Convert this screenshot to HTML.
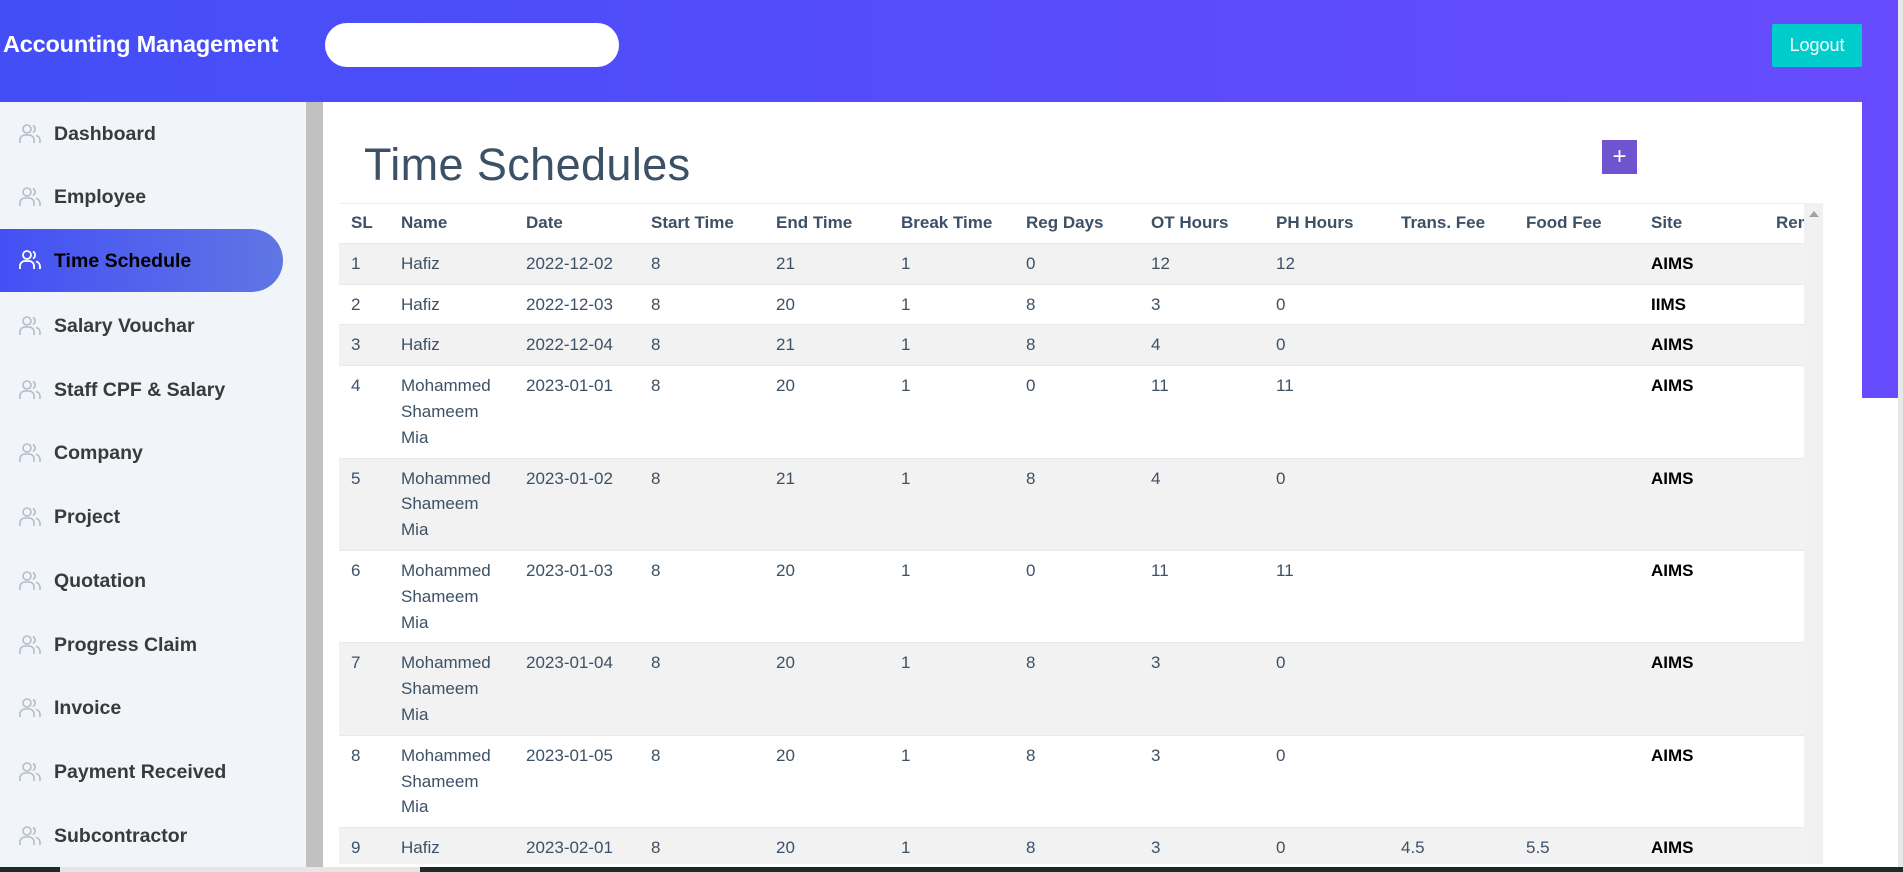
<!DOCTYPE html>
<html><head><meta charset="utf-8"><style>
*{box-sizing:border-box;margin:0;padding:0}
html,body{width:1903px;height:872px;overflow:hidden;background:#fff;font-family:"Liberation Sans",Arial,sans-serif}
.hdr{position:absolute;left:0;top:0;width:1898px;height:102px;background:linear-gradient(90deg,#434ef7,#5a4cfb 60%,#674cfd)}
.rstrip{position:absolute;left:1862px;top:102px;width:36px;height:296px;background:#674cfd}
.pscroll{position:absolute;left:1898px;top:0;width:5px;height:872px;background:#e8e8e8}
.brand{position:absolute;left:3px;top:31px;color:#fff;font-weight:bold;font-size:23.5px;letter-spacing:-0.2px}
.search{position:absolute;left:325px;top:23px;width:294px;height:44px;background:#fff;border-radius:22px}
.logout{position:absolute;left:1772px;top:24px;width:90px;height:43px;background:#00cccc;color:#fff;font-size:18px;text-align:center;line-height:43px;border-radius:2px}
.side{position:absolute;left:0;top:102px;width:306px;height:765px;background:#f1f4f9}
.sbar{position:absolute;left:306px;top:102px;width:17px;height:765px;background:#c1c1c1}
.item{position:absolute;left:0;height:40px;width:283px;font-size:19.5px;font-weight:bold;color:#3a3a3a;line-height:40px;padding-left:54px}
.item svg{position:absolute;left:19px;top:10px}
.item.act{height:63px;line-height:63px;border-radius:0 32px 32px 0;background:linear-gradient(90deg,#4450f5,#5f76e4);color:#000}
.item.act svg{top:21px}
.card{position:absolute;left:325px;top:102px;width:1537px;height:770px;background:#fff;border-radius:8px 8px 0 0}
h1{position:absolute;left:364px;top:139px;font-size:45px;font-weight:normal;color:#3d5166;letter-spacing:0.4px}
.plus{position:absolute;left:1602px;top:140px;width:35px;height:34px;background:#7053cf;color:#fff;font-size:24px;text-align:center;line-height:33px}
.tw{position:absolute;left:339px;top:203px;width:1465px;height:661px;overflow:hidden;border-top:1px solid #e9ecef}
table{border-collapse:collapse;table-layout:fixed;width:1550px}
td,th{padding:7px 12px;font-size:17px;line-height:25.8px;color:#3d5166;text-align:left;vertical-align:top;white-space:normal;border-bottom:1px solid #e6e9ed}
th{font-weight:bold;color:#3d5166;padding:6px 12px 7px}
tbody tr:nth-child(odd) td{background:#f2f2f2}
td.s{font-weight:bold;color:#000}
.vs{position:absolute;left:1804px;top:203px;width:19px;height:661px;background:#f1f1f1}
.vs:before{content:"";position:absolute;left:5px;top:8px;border:5px solid transparent;border-bottom:6px solid #a3a3a3;border-top:0}
.task{position:absolute;left:0;top:867px;width:1903px;height:5px;background:#1c2a2a}
.task i{position:absolute;left:60px;top:0;width:360px;height:5px;background:#e6e6e6}
</style></head><body>
<div class="hdr"></div><div class="rstrip"></div><div class="pscroll"></div>
<div class="brand">Accounting Management</div>
<div class="search"></div>
<div class="logout">Logout</div>
<div class="side"></div><div class="sbar"></div>
<div class="card"></div>
<h1>Time Schedules</h1>
<div class="plus">+</div>
<div class="tw"><table>
<colgroup><col style="width:50px"><col style="width:125px"><col style="width:125px"><col style="width:125px"><col style="width:125px"><col style="width:125px"><col style="width:125px"><col style="width:125px"><col style="width:125px"><col style="width:125px"><col style="width:125px"><col style="width:125px"><col style="width:125px"></colgroup>
<thead><tr><th>SL</th><th>Name</th><th>Date</th><th>Start Time</th><th>End Time</th><th>Break Time</th><th>Reg Days</th><th>OT Hours</th><th>PH Hours</th><th>Trans. Fee</th><th>Food Fee</th><th>Site</th><th>Remarks</th></tr></thead>
<tbody>
<tr><td>1</td><td>Hafiz</td><td>2022-12-02</td><td>8</td><td>21</td><td>1</td><td>0</td><td>12</td><td>12</td><td></td><td></td><td class="s">AIMS</td><td></td></tr>
<tr><td>2</td><td>Hafiz</td><td>2022-12-03</td><td>8</td><td>20</td><td>1</td><td>8</td><td>3</td><td>0</td><td></td><td></td><td class="s">IIMS</td><td></td></tr>
<tr><td>3</td><td>Hafiz</td><td>2022-12-04</td><td>8</td><td>21</td><td>1</td><td>8</td><td>4</td><td>0</td><td></td><td></td><td class="s">AIMS</td><td></td></tr>
<tr><td>4</td><td>Mohammed Shameem Mia</td><td>2023-01-01</td><td>8</td><td>20</td><td>1</td><td>0</td><td>11</td><td>11</td><td></td><td></td><td class="s">AIMS</td><td></td></tr>
<tr><td>5</td><td>Mohammed Shameem Mia</td><td>2023-01-02</td><td>8</td><td>21</td><td>1</td><td>8</td><td>4</td><td>0</td><td></td><td></td><td class="s">AIMS</td><td></td></tr>
<tr><td>6</td><td>Mohammed Shameem Mia</td><td>2023-01-03</td><td>8</td><td>20</td><td>1</td><td>0</td><td>11</td><td>11</td><td></td><td></td><td class="s">AIMS</td><td></td></tr>
<tr><td>7</td><td>Mohammed Shameem Mia</td><td>2023-01-04</td><td>8</td><td>20</td><td>1</td><td>8</td><td>3</td><td>0</td><td></td><td></td><td class="s">AIMS</td><td></td></tr>
<tr><td>8</td><td>Mohammed Shameem Mia</td><td>2023-01-05</td><td>8</td><td>20</td><td>1</td><td>8</td><td>3</td><td>0</td><td></td><td></td><td class="s">AIMS</td><td></td></tr>
<tr><td>9</td><td>Hafiz</td><td>2023-02-01</td><td>8</td><td>20</td><td>1</td><td>8</td><td>3</td><td>0</td><td>4.5</td><td>5.5</td><td class="s">AIMS</td><td></td></tr>
</tbody></table></div>
<div class="vs"></div>
<div class="task"><i></i></div>

<div class="item" style="top:114px"><svg width="22" height="20" viewBox="0 0 22 20" fill="none" stroke="#b4bccb" stroke-width="1.6"><circle cx="8" cy="5" r="4"/><path d="M1 19v-3a5 5 0 0 1 5-5h4a5 5 0 0 1 5 5v3M14 1.5a4 4 0 0 1 0 7M17 11.5a5 5 0 0 1 4 4.5v3"/></svg>Dashboard</div>
<div class="item" style="top:177px"><svg width="22" height="20" viewBox="0 0 22 20" fill="none" stroke="#b4bccb" stroke-width="1.6"><circle cx="8" cy="5" r="4"/><path d="M1 19v-3a5 5 0 0 1 5-5h4a5 5 0 0 1 5 5v3M14 1.5a4 4 0 0 1 0 7M17 11.5a5 5 0 0 1 4 4.5v3"/></svg>Employee</div>
<div class="item act" style="top:229px;line-height:65px"><svg width="22" height="20" viewBox="0 0 22 20" fill="none" stroke="#fff" stroke-width="1.8"><circle cx="8" cy="5" r="4"/><path d="M1 19v-3a5 5 0 0 1 5-5h4a5 5 0 0 1 5 5v3M14 1.5a4 4 0 0 1 0 7M17 11.5a5 5 0 0 1 4 4.5v3"/></svg>Time Schedule</div>
<div class="item" style="top:306px"><svg width="22" height="20" viewBox="0 0 22 20" fill="none" stroke="#b4bccb" stroke-width="1.6"><circle cx="8" cy="5" r="4"/><path d="M1 19v-3a5 5 0 0 1 5-5h4a5 5 0 0 1 5 5v3M14 1.5a4 4 0 0 1 0 7M17 11.5a5 5 0 0 1 4 4.5v3"/></svg>Salary Vouchar</div>
<div class="item" style="top:370px"><svg width="22" height="20" viewBox="0 0 22 20" fill="none" stroke="#b4bccb" stroke-width="1.6"><circle cx="8" cy="5" r="4"/><path d="M1 19v-3a5 5 0 0 1 5-5h4a5 5 0 0 1 5 5v3M14 1.5a4 4 0 0 1 0 7M17 11.5a5 5 0 0 1 4 4.5v3"/></svg>Staff CPF &amp; Salary</div>
<div class="item" style="top:433px"><svg width="22" height="20" viewBox="0 0 22 20" fill="none" stroke="#b4bccb" stroke-width="1.6"><circle cx="8" cy="5" r="4"/><path d="M1 19v-3a5 5 0 0 1 5-5h4a5 5 0 0 1 5 5v3M14 1.5a4 4 0 0 1 0 7M17 11.5a5 5 0 0 1 4 4.5v3"/></svg>Company</div>
<div class="item" style="top:497px"><svg width="22" height="20" viewBox="0 0 22 20" fill="none" stroke="#b4bccb" stroke-width="1.6"><circle cx="8" cy="5" r="4"/><path d="M1 19v-3a5 5 0 0 1 5-5h4a5 5 0 0 1 5 5v3M14 1.5a4 4 0 0 1 0 7M17 11.5a5 5 0 0 1 4 4.5v3"/></svg>Project</div>
<div class="item" style="top:561px"><svg width="22" height="20" viewBox="0 0 22 20" fill="none" stroke="#b4bccb" stroke-width="1.6"><circle cx="8" cy="5" r="4"/><path d="M1 19v-3a5 5 0 0 1 5-5h4a5 5 0 0 1 5 5v3M14 1.5a4 4 0 0 1 0 7M17 11.5a5 5 0 0 1 4 4.5v3"/></svg>Quotation</div>
<div class="item" style="top:625px"><svg width="22" height="20" viewBox="0 0 22 20" fill="none" stroke="#b4bccb" stroke-width="1.6"><circle cx="8" cy="5" r="4"/><path d="M1 19v-3a5 5 0 0 1 5-5h4a5 5 0 0 1 5 5v3M14 1.5a4 4 0 0 1 0 7M17 11.5a5 5 0 0 1 4 4.5v3"/></svg>Progress Claim</div>
<div class="item" style="top:688px"><svg width="22" height="20" viewBox="0 0 22 20" fill="none" stroke="#b4bccb" stroke-width="1.6"><circle cx="8" cy="5" r="4"/><path d="M1 19v-3a5 5 0 0 1 5-5h4a5 5 0 0 1 5 5v3M14 1.5a4 4 0 0 1 0 7M17 11.5a5 5 0 0 1 4 4.5v3"/></svg>Invoice</div>
<div class="item" style="top:752px"><svg width="22" height="20" viewBox="0 0 22 20" fill="none" stroke="#b4bccb" stroke-width="1.6"><circle cx="8" cy="5" r="4"/><path d="M1 19v-3a5 5 0 0 1 5-5h4a5 5 0 0 1 5 5v3M14 1.5a4 4 0 0 1 0 7M17 11.5a5 5 0 0 1 4 4.5v3"/></svg>Payment Received</div>
<div class="item" style="top:816px"><svg width="22" height="20" viewBox="0 0 22 20" fill="none" stroke="#b4bccb" stroke-width="1.6"><circle cx="8" cy="5" r="4"/><path d="M1 19v-3a5 5 0 0 1 5-5h4a5 5 0 0 1 5 5v3M14 1.5a4 4 0 0 1 0 7M17 11.5a5 5 0 0 1 4 4.5v3"/></svg>Subcontractor</div>
</body></html>
